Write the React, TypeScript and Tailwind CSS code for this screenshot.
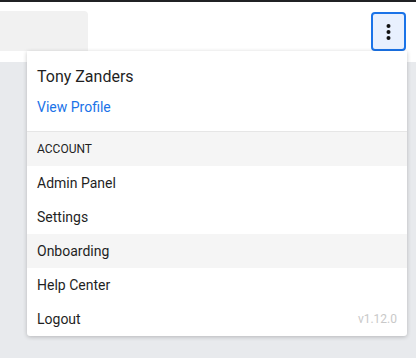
import React from "react";

const items = ["Admin Panel", "Settings", "Onboarding", "Help Center", "Logout"];

const KebabIcon = () => (
    <svg width="5" height="16" viewBox="0 0 5 16" fill="#111">
        <circle cx="2.5" cy="2" r="2" />
        <circle cx="2.5" cy="8" r="2" />
        <circle cx="2.5" cy="14" r="2" />
    </svg>
);

const App = () => (
    <div className="relative flex h-[358px] w-[416px] flex-col overflow-hidden bg-[#e8eaed] font-['Roboto',sans-serif]">
        <div className="h-[2px] bg-[#202124]" />

        <header className="flex h-[60px] items-start justify-between bg-white">
            <div className="mt-[9px] h-10 w-[88px] rounded-tr-sm bg-[#f1f1f1]" />
            <button className="mr-[10px] mt-[10px] flex h-[39px] w-[35px] items-center justify-center rounded-[4px] border-2 border-[#1a73e8] bg-[#e8f0fe]">
                <KebabIcon />
            </button>
        </header>

        {/* dropdown menu */}
        <div className="absolute left-[27px] top-[51px] w-[380px] rounded-b-[3px] bg-white shadow-[0_1px_4px_rgba(0,0,0,0.22)]">
            <div className="flex h-[80px] flex-col px-2.5 pt-[14px]">
                <span className="text-base leading-6 text-[#1f1f1f]">Tony Zanders</span>
                <a className="mt-2 text-sm leading-5 text-[#1a73e8]">View Profile</a>
            </div>

            <div className="flex h-[35px] items-center border-t border-[#e6e6e6] bg-[#f5f5f5] px-2.5 text-xs leading-4 text-[#1f1f1f]">
                ACCOUNT
            </div>

            {items.map((item) => (
                <div
                    key={item}
                    className={
                        "flex h-[34px] items-center justify-between px-2.5 text-sm leading-5 text-[#1f1f1f] " +
                        (item === "Onboarding" ? "bg-[#f5f5f5]" : "")
                    }
                >
                    <span>{item}</span>
                    {item === "Logout" && <span className="text-xs leading-4 text-[#c9c9c9]">v1.12.0</span>}
                </div>
            ))}
        </div>
    </div>
);

export default App;
